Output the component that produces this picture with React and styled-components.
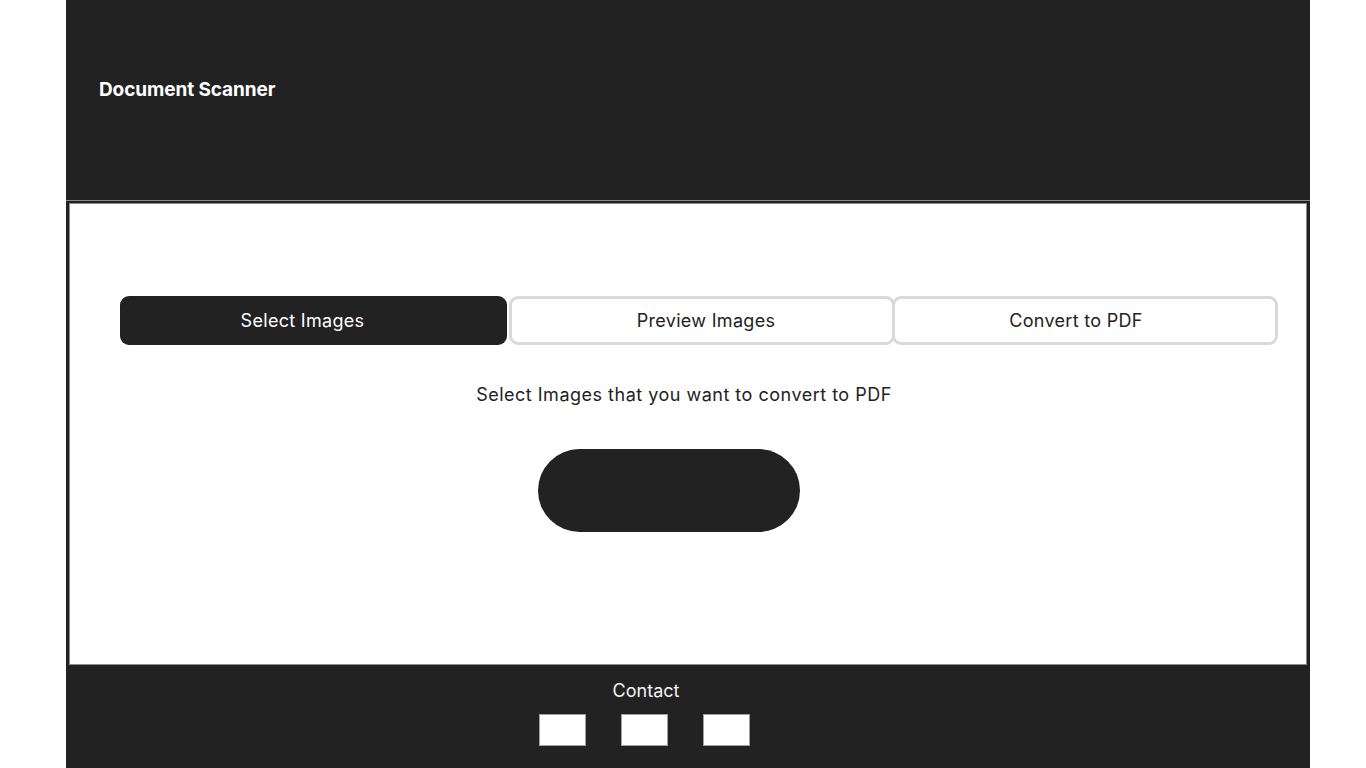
import React from 'react'
import styled, { createGlobalStyle } from 'styled-components'

const GlobalStyle = createGlobalStyle`
  body {
    margin: 0;
    background: #ffffff;
    font-family: Inter, "Open Sans", sans-serif;
  }
`

const Page = styled.div`
  width: 1244px;
  margin-left: 66px;
  background-color: #222222;
`

const Header = styled.header`
  height: 200px;
  display: flex;
  align-items: center;
  padding: 0 0 22px 33px;
  box-sizing: border-box;
`

const Title = styled.h1`
  margin: 0;
  color: #ffffff;
  font-size: 19px;
  font-weight: 700;
  letter-spacing: -0.1px;
`

const Main = styled.main`
  border-top: 1px solid #8a8a8a;
  padding: 2px 3px 0 3px;
`

const Card = styled.section`
  background: #ffffff;
  border: 1px solid #8a8a8a;
  height: 462px;
  box-sizing: border-box;
  padding: 92px 29px 0 50px;
  display: flex;
  flex-direction: column;
`

const Tabs = styled.div`
  display: flex;
  height: 49px;
`

const Tab = styled.button`
  flex: 0 0 ${props => props.width}px;
  margin-left: ${props => props.overlap || 0}px;
  padding: 0 ${props => (props.shift < 0 ? -props.shift * 2 : 0)}px 0 ${props => (props.shift > 0 ? props.shift * 2 : 0)}px;
  height: 49px;
  box-sizing: border-box;
  border-radius: 9px;
  font-family: Inter, "Open Sans", sans-serif;
  font-size: 18px;
  letter-spacing: 0.3px;
  cursor: pointer;
  background: ${props => (props.active ? '#222222' : '#ffffff')};
  color: ${props => (props.active ? '#ffffff' : '#222222')};
  border: ${props => (props.active ? 'none' : '3px solid #d9d9d9')};
`

const Hint = styled.p`
  margin: 38px 0 0 -29px;
  text-align: center;
  font-size: 18px;
  letter-spacing: 0.5px;
  color: #222222;
  line-height: 24px;
`

const PickButton = styled.button`
  width: 262px;
  height: 83px;
  margin: 42px 0 0 418px;
  border: none;
  border-radius: 42px;
  background: #222222;
  cursor: pointer;
`

const Footer = styled.footer`
  padding: 14px 88px 22px 0;
  display: flex;
  flex-direction: column;
  align-items: center;
`

const FooterTitle = styled.div`
  color: #f2f2f2;
  font-size: 18px;
  line-height: 24px;
  margin-left: 4px;
`

const Links = styled.div`
  display: flex;
  gap: 35px;
  margin-top: 11px;
`

const LinkBox = styled.a`
  display: block;
  width: 47px;
  height: 32px;
  box-sizing: border-box;
  background: #ffffff;
  border: 1px solid #a0a0a0;
`

export default function App() {
  return (
    <>
      <GlobalStyle />
      <Page>
        <Header>
          <Title>Document Scanner</Title>
        </Header>
        <Main>
          <Card>
            <Tabs>
              <Tab active width={387} shift={-11}>Select Images</Tab>
              <Tab width={386} overlap={2} shift={4}>Preview Images</Tab>
              <Tab width={386} overlap={-3} shift={-9}>Convert to PDF</Tab>
            </Tabs>
            <Hint>Select Images that you want to convert to PDF</Hint>
            <PickButton aria-label="Select images" />
          </Card>
        </Main>
        <Footer>
          <FooterTitle>Contact</FooterTitle>
          <Links>
            <LinkBox href="#" />
            <LinkBox href="#" />
            <LinkBox href="#" />
          </Links>
        </Footer>
      </Page>
    </>
  )
}
